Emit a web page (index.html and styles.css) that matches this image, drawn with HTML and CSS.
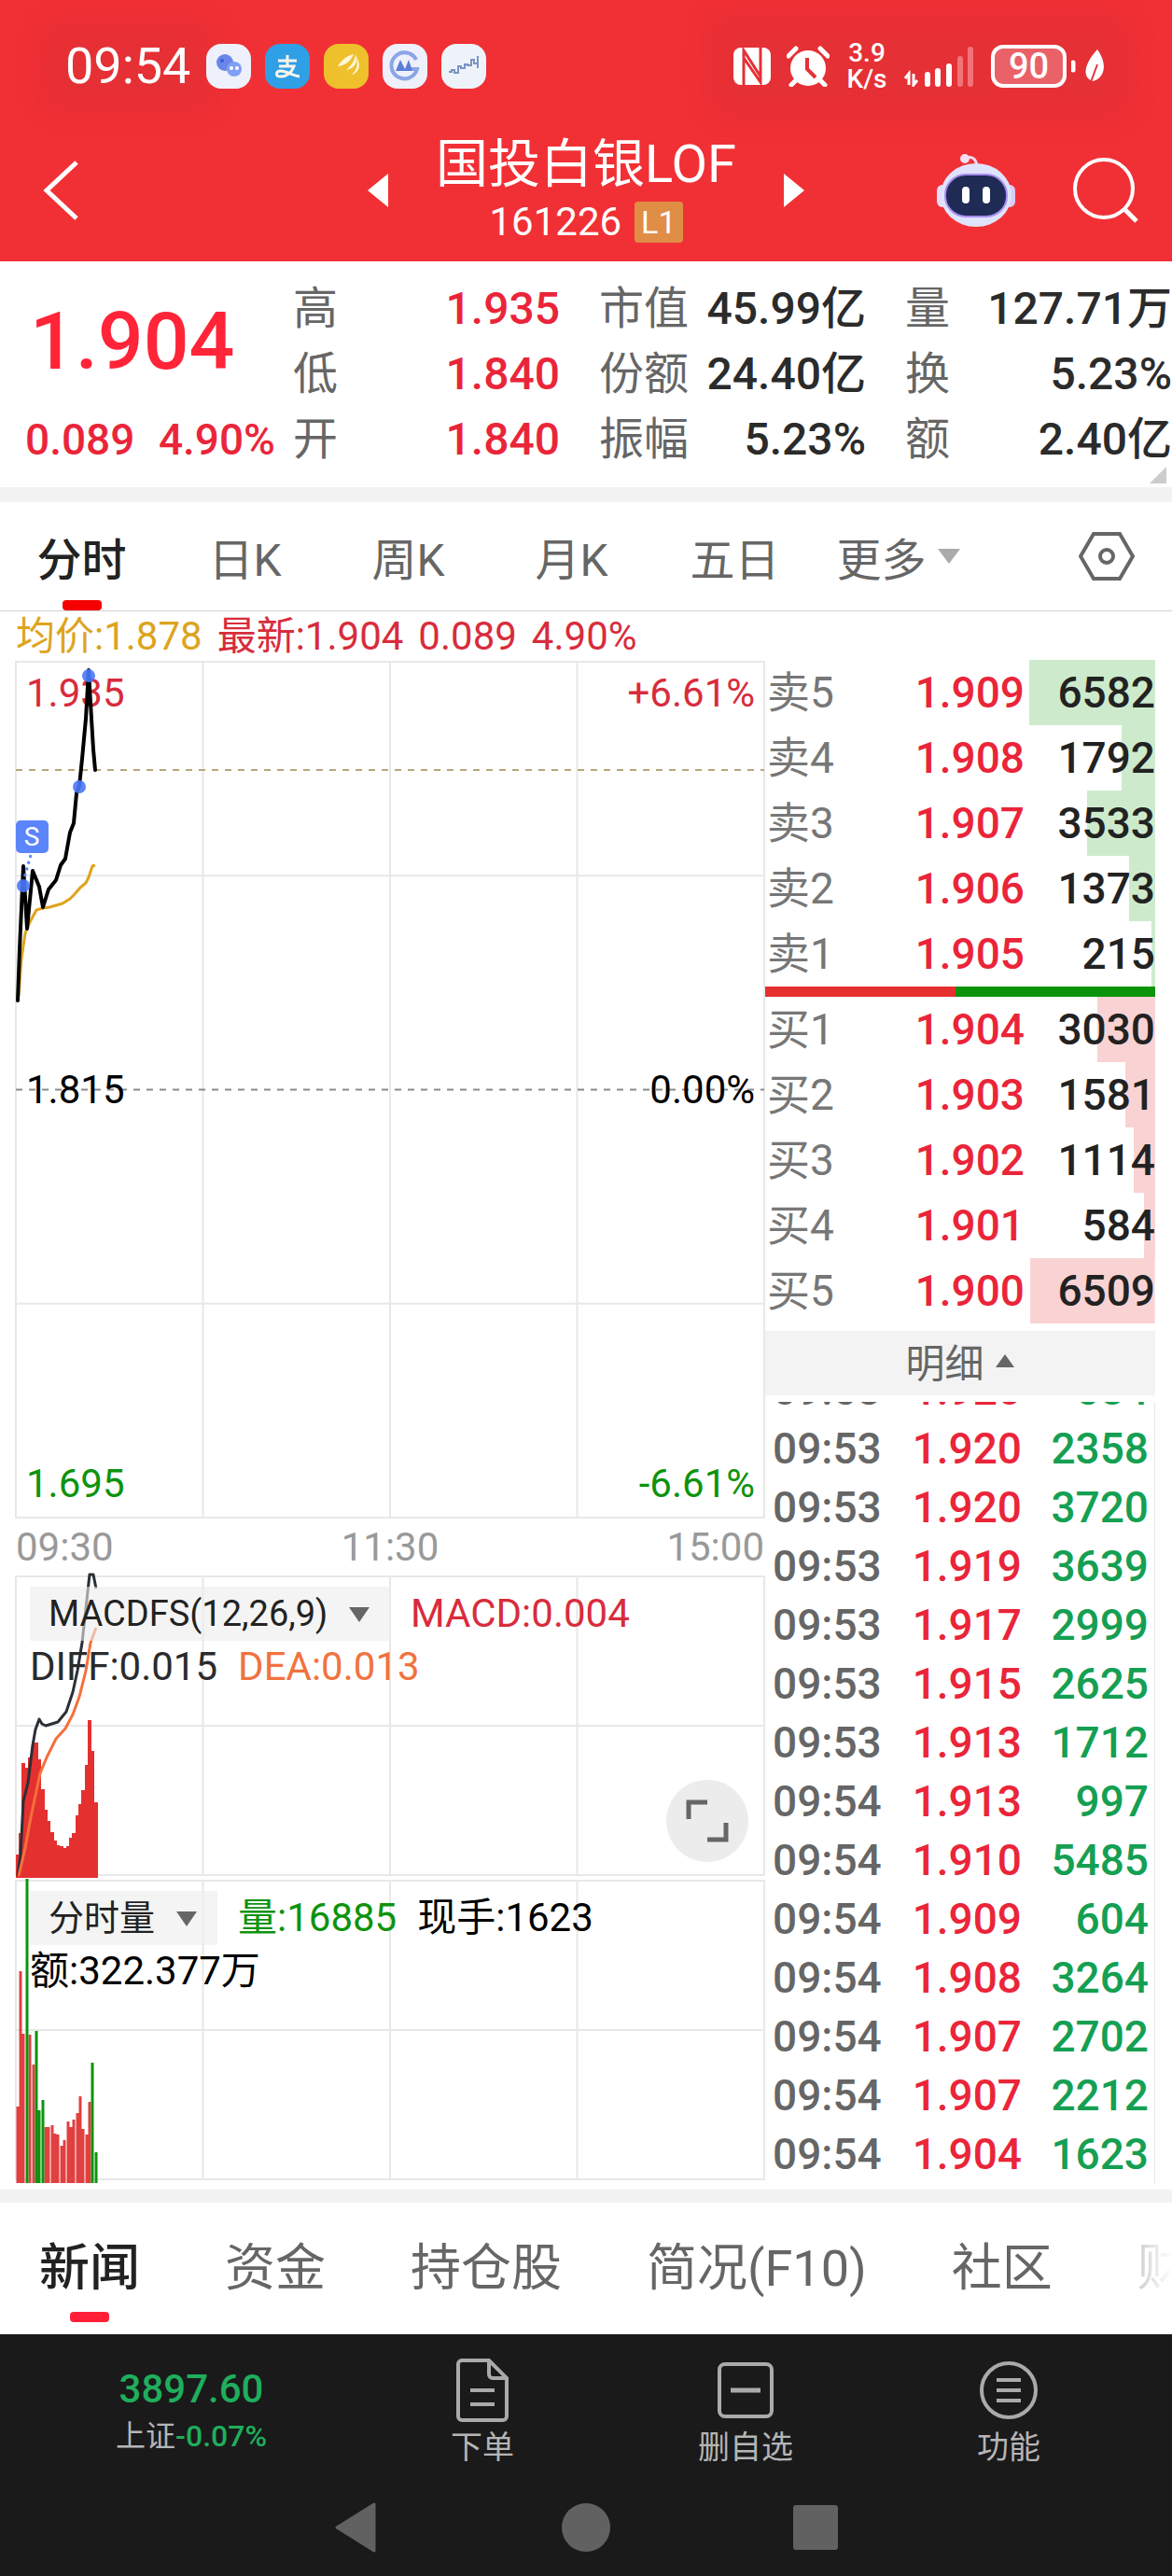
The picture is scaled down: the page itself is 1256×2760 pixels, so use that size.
FILE: index.html
```html
<!DOCTYPE html>
<html lang="zh-CN">
<head>
  <meta charset="UTF-8" />
  <meta name="viewport" content="width=device-width, initial-scale=1.0"/>
  <title>国投白银LOF 161226</title>
  <link rel="stylesheet" href="styles.css">
</head>
<body>
  <header class="top">
    <div class="status">
      <span class="clock">09:54</span>
      <div class="apps">
        <svg width="48" height="48" viewBox="0 0 48 48">
          <rect width="48" height="48" rx="16" fill="#eef1fb"/>
          <circle cx="20" cy="20" r="9" fill="#6a86ea"/>
          <circle cx="30" cy="27" r="8" fill="#7fa0f4"/>
          <circle cx="17" cy="18" r="2" fill="#3f5fd0"/>
          <circle cx="27" cy="26" r="2" fill="#fff"/>
          <circle cx="33" cy="26" r="2" fill="#fff"/>
        </svg>
        <svg width="48" height="48" viewBox="0 0 48 48">
          <rect width="48" height="48" rx="16" fill="#2f9fe6"/>
          <path d="M14 18h20M24 12v11M15 24h16c-3 8-9 11-14 11-6 0-6-6 0-6 6 0 12 5 20 6" fill="none" stroke="#fdf6ea" stroke-width="3"/>
        </svg>
        <svg width="48" height="48" viewBox="0 0 48 48">
          <rect width="48" height="48" rx="16" fill="#eec02c"/>
          <path d="M15 24c5-8 10-11 17-13-3 7-8 12-17 13zM24 28c6-5 9-10 10-17 3 8 0 15-10 17zM29 34c6-5 8-11 6-20 5 8 4 16-6 20z" fill="#fff6dc"/>
        </svg>
        <svg width="48" height="48" viewBox="0 0 48 48">
          <rect width="48" height="48" rx="16" fill="#eef1fb"/>
          <path d="M36 17a14 14 0 1 0 1 10H28" fill="none" stroke="#8aa6e6" stroke-width="4"/>
          <path d="M14 29l5-12 5 10 4-10 4 12z" fill="#5b7fd8"/>
        </svg>
        <svg width="48" height="48" viewBox="0 0 48 48">
          <rect width="48" height="48" rx="16" fill="#eef3fa"/>
          <path d="M8 30h3v-2h3v3h4v-7h3v2h4v-4h3v1h4v-6h3v4h4v-8v13" fill="none" stroke="#7b93c4" stroke-width="2"/>
        </svg>
      </div>
      <div class="status-right">
        <svg width="40" height="42" viewBox="0 0 40 42">
          <rect y="1" width="40" height="40" rx="8" fill="#fff"/>
          <path d="M11 41V4l18 28M29 1v37L11 12" fill="none" stroke="#e53036" stroke-width="3"/>
        </svg>
        <svg width="46" height="44" viewBox="0 0 46 44">
          <circle cx="23" cy="24" r="19" fill="#fff"/>
          <path d="M2 11l8-8M44 11l-8-8M10 37l-5 5M36 37l5 5" stroke="#fff" stroke-width="5" stroke-linecap="round"/>
          <path d="M22 13v12l9 9" fill="none" stroke="#e53036" stroke-width="4"/>
        </svg>
        <div class="speed"><span>3.9</span><span>K/s</span></div>
        <svg width="76" height="44" viewBox="0 0 76 44">
          <path d="M5 42V30l-4 5M10 30v12l4-5" fill="none" stroke="#fff" stroke-width="3"/>
          <path d="M25 31v10M36 27v14M48 22v19" stroke="#fff" stroke-width="6" stroke-linecap="round"/>
          <path d="M60 14v27M71 4v37" stroke="#f17478" stroke-width="6" stroke-linecap="round"/>
        </svg>
        <div class="battery">90</div>
        <svg class="leaf" width="36" height="36" viewBox="0 0 36 36">
          <path d="M2 14v8" stroke="#fff" stroke-width="5" stroke-linecap="round"/>
          <path d="M28 0c12 17 7 31-5 34-12-4-9-19 5-34z" fill="#fff"/>
          <path d="M21 35l7-19" stroke="#e53036" stroke-width="2"/>
        </svg>
      </div>
    </div>

    <div class="titlebar">
      <button class="back" aria-label="返回">
        <svg width="40" height="66" viewBox="0 0 40 66"><path d="M36 3L4 33l32 30" fill="none" stroke="#fff" stroke-width="5"/></svg>
      </button>
      <div class="stock">
        <button aria-label="上一只"><svg width="22" height="36" viewBox="0 0 22 36"><path d="M22 0v36L0 18z" fill="#fff"/></svg></button>
        <div class="stock-name">
          <h1>国投白银LOF</h1>
          <p>161226 <span class="level">L1</span></p>
        </div>
        <button aria-label="下一只"><svg width="22" height="36" viewBox="0 0 22 36"><path d="M0 0v36l22-18z" fill="#fff"/></svg></button>
      </div>
      <div class="actions">
        <button aria-label="助手">
          <svg width="84" height="80" viewBox="0 0 84 80">
            <path d="M31 5c8-2 11 2 12 9" fill="none" stroke="#f1dcf2" stroke-width="3"/>
            <circle cx="30" cy="6" r="5" fill="#f6dff0"/>
            <rect x="0" y="34" width="14" height="24" rx="6" fill="#e6dcfa"/>
            <rect x="70" y="34" width="14" height="24" rx="6" fill="#d9ccf8"/>
            <ellipse cx="42" cy="45" rx="38" ry="34" fill="#dfe3fb"/>
            <rect x="9" y="23" width="66" height="45" rx="22" fill="#1f2b55" stroke="#a78cf0" stroke-width="2"/>
            <path d="M31 40v10M53 40v10" stroke="#fff" stroke-width="8" stroke-linecap="round"/>
          </svg>
        </button>
        <button aria-label="搜索">
          <svg width="70" height="70" viewBox="0 0 70 70"><circle cx="33" cy="33" r="31" fill="none" stroke="#fff" stroke-width="4"/><path d="M55 55l13 13" stroke="#fff" stroke-width="5"/></svg>
        </button>
      </div>
    </div>
  </header>

  <section class="quote">
    <div class="price">
      <strong>1.904</strong>
      <div class="change"><span>0.089</span><span>4.90%</span></div>
    </div>
    <dl class="stats up">
      <div><dt>高</dt><dd>1.935</dd></div>
      <div><dt>低</dt><dd>1.840</dd></div>
      <div><dt>开</dt><dd>1.840</dd></div>
    </dl>
    <dl class="stats">
      <div><dt>市值</dt><dd>45.99亿</dd></div>
      <div><dt>份额</dt><dd>24.40亿</dd></div>
      <div><dt>振幅</dt><dd>5.23%</dd></div>
    </dl>
    <dl class="stats">
      <div><dt>量</dt><dd>127.71万</dd></div>
      <div><dt>换</dt><dd>5.23%</dd></div>
      <div><dt>额</dt><dd>2.40亿</dd></div>
    </dl>
    <svg class="corner" width="18" height="18" viewBox="0 0 18 18"><path d="M18 0v18H0z" fill="#ccc"/></svg>
  </section>

  <nav class="periods">
    <button class="active">分时</button>
    <button>日K</button>
    <button>周K</button>
    <button>月K</button>
    <button>五日</button>
    <button>更多<svg width="24" height="16" viewBox="0 0 24 16"><path d="M0 0h24L12 16z" fill="#aaa"/></svg></button>
    <button class="settings" aria-label="设置">
      <svg width="60" height="52" viewBox="0 0 60 52"><path d="M16 2h28l14 24-14 24H16L2 26z" fill="none" stroke="#666" stroke-width="4"/><circle cx="30" cy="26" r="7" fill="none" stroke="#666" stroke-width="4"/></svg>
    </button>
  </nav>

  <main class="trade">
    <div class="charts">
      <p class="summary"><span class="avg">均价:1.878</span><span class="last">最新:1.904</span><span class="last">0.089</span><span class="last">4.90%</span></p>

      <div class="panel main-panel">
        <svg class="plot" width="100%" height="100%">
          <g class="grid">
            <rect width="100%" height="100%"/>
            <line x1="25%" x2="25%" y2="100%"/>
            <line x1="50%" x2="50%" y2="100%"/>
            <line x1="75%" x2="75%" y2="100%"/>
            <line y1="25%" x2="100%" y2="25%"/>
            <line y1="75%" x2="100%" y2="75%"/>
          </g>
          <line class="dash gold" y1="116" x2="100%" y2="116"/>
          <line class="dash" y1="50%" x2="100%" y2="50%"/>
        </svg>
        <span class="tag left high">1.935</span>
        <span class="tag right high">+6.61%</span>
        <span class="tag left mid">1.815</span>
        <span class="tag right mid">0.00%</span>
        <span class="tag left low">1.695</span>
        <span class="tag right low">-6.61%</span>
        <svg class="plot" width="100%" height="100%">
          <polyline class="line-avg" points="3,358 6,318 10,291 15,279 22,266 29,264 36,263 50,259 58,254 63,249 69,242 75,237 78,231 82,219 85,218"/>
          <polyline class="line-price" points="2,363 4,308 8,219 12,286 18,224 25,241 29,263 35,244 43,234 48,218 53,211 58,183 62,173 65,141 68,133 71,104 75,61 78,9 81,61 83,94 85,116"/>
          <line class="lead" x1="16" y1="207" x2="9" y2="232"/>
          <g fill="#4a78fa" fill-opacity=".9">
            <circle cx="78" cy="15" r="7"/>
            <circle cx="68" cy="134" r="7"/>
            <circle cx="8" cy="240" r="7"/>
          </g>
          <rect y="170" width="35" height="35" rx="5" fill="#5b85fb"/>
          <text class="mark" x="17" y="197">S</text>
        </svg>
      </div>

      <div class="axis"><span>09:30</span><span>11:30</span><span>15:00</span></div>

      <div class="panel sub-panel">
        <svg class="plot" width="100%" height="100%">
          <g class="grid">
            <rect width="100%" height="100%"/>
            <line x1="25%" x2="25%" y2="100%"/>
            <line x1="50%" x2="50%" y2="100%"/>
            <line x1="75%" x2="75%" y2="100%"/>
            <line y1="50%" x2="100%" y2="50%"/>
          </g>
          <path class="bars-solid" d="M2 323v-25M5 323v-48M8 323v-123M12 323v-118M15 323v-129M19 323v-145M22 323v-145M25 323v-127M29 323v-95M32 323v-73M35 323v-61M39 323v-49M42 323v-40M45 323v-35M49 323v-34M52 323v-32M56 323v-34M59 323v-43M62 323v-48M66 323v-67M69 323v-79M72 323v-94M76 323v-121M79 323v-169M82 323v-136M86 323v-81"/>
          <polyline class="line-diff" points="2,321 5,298 8,241 13,221 18,181 21,164 25,153 28,158 32,160 45,156 54,145 61,124 66,101 71,71 79,-2 83,-2 86,13"/>
          <polyline class="line-dea" points="3,321 10,291 16,258 26,211 33,194 43,174 53,163 61,148 68,129 75,101 80,71 86,55"/>
        </svg>
        <div class="legend">
          <div class="picker">
            <select aria-label="指标"><option>MACDFS(12,26,9)</option></select>
            <svg width="22" height="16" viewBox="0 0 22 16"><path d="M0 0h22L11 16z" fill="#666"/></svg>
          </div>
          <span class="last">MACD:0.004</span>
        </div>
        <div class="legend"><span class="diff">DIFF:0.015</span><span class="dea">DEA:0.013</span></div>
        <button class="expand" aria-label="全屏">
          <svg width="46" height="46" viewBox="0 0 46 46"><path d="M3 21V3h20M43 25v18H23" fill="none" stroke="#666" stroke-width="5"/></svg>
        </button>
      </div>

      <div class="panel sub-panel">
        <svg class="plot" width="100%" height="100%">
          <g class="grid">
            <rect width="100%" height="100%"/>
            <line x1="25%" x2="25%" y2="100%"/>
            <line x1="50%" x2="50%" y2="100%"/>
            <line x1="75%" x2="75%" y2="100%"/>
            <line y1="50%" x2="100%" y2="50%"/>
          </g>
        </svg>
        <div class="legend">
          <div class="picker">
            <select aria-label="副图"><option>分时量</option></select>
            <svg width="22" height="16" viewBox="0 0 22 16"><path d="M0 0h22L11 16z" fill="#666"/></svg>
          </div>
          <span class="vol">量:16885</span><span class="black">现手:1623</span>
        </div>
        <div class="legend"><span class="black">额:322.377万</span></div>
        <svg class="plot" width="100%" height="100%">
          <path class="bars-up" d="M2 324v-82M5 324v-227M8 324v-160M15 324v-159M19 324v-127M32 324v-60M35 324v-60M39 324v-62M42 324v-53M45 324v-52M49 324v-40M52 324v-46M56 324v-66M59 324v-60M62 324v-68M66 324v-75M69 324v-93M72 324v-58M76 324v-52M79 324v-87"/>
          <path class="bars-down" d="M12 324v-326M22 324v-163M25 324v-78M29 324v-89M82 324v-129M86 324v-33"/>
        </svg>
      </div>
    </div>

    <aside class="book">
      <table class="depth sell">
        <tr><th>卖5</th><td>1.909</td><td style="--size:100%">6582</td></tr>
        <tr><th>卖4</th><td>1.908</td><td style="--size:27%">1792</td></tr>
        <tr><th>卖3</th><td>1.907</td><td style="--size:54%">3533</td></tr>
        <tr><th>卖2</th><td>1.906</td><td style="--size:21%">1373</td></tr>
        <tr><th>卖1</th><td>1.905</td><td style="--size:3%">215</td></tr>
      </table>
      <div class="ratio"><i style="width:49%"></i></div>
      <table class="depth buy">
        <tr><th>买1</th><td>1.904</td><td style="--size:46%">3030</td></tr>
        <tr><th>买2</th><td>1.903</td><td style="--size:24%">1581</td></tr>
        <tr><th>买3</th><td>1.902</td><td style="--size:17%">1114</td></tr>
        <tr><th>买4</th><td>1.901</td><td style="--size:9%">584</td></tr>
        <tr><th>买5</th><td>1.900</td><td style="--size:99%">6509</td></tr>
      </table>
      <button class="detail">明细<svg width="20" height="14" viewBox="0 0 20 14"><path d="M10 0l10 14H0z" fill="#666"/></svg></button>
      <div class="ticks">
        <table>
          <tr><td>09:53</td><td>1.920</td><td>584</td></tr>
          <tr><td>09:53</td><td>1.920</td><td>2358</td></tr>
          <tr><td>09:53</td><td>1.920</td><td>3720</td></tr>
          <tr><td>09:53</td><td>1.919</td><td>3639</td></tr>
          <tr><td>09:53</td><td>1.917</td><td>2999</td></tr>
          <tr><td>09:53</td><td>1.915</td><td>2625</td></tr>
          <tr><td>09:53</td><td>1.913</td><td>1712</td></tr>
          <tr><td>09:54</td><td>1.913</td><td>997</td></tr>
          <tr><td>09:54</td><td>1.910</td><td>5485</td></tr>
          <tr><td>09:54</td><td>1.909</td><td>604</td></tr>
          <tr><td>09:54</td><td>1.908</td><td>3264</td></tr>
          <tr><td>09:54</td><td>1.907</td><td>2702</td></tr>
          <tr><td>09:54</td><td>1.907</td><td>2212</td></tr>
          <tr><td>09:54</td><td>1.904</td><td>1623</td></tr>
        </table>
      </div>
    </aside>
  </main>

  <nav class="news">
    <button class="active">新闻</button>
    <button>资金</button>
    <button>持仓股</button>
    <button>简况(F10)</button>
    <button>社区</button>
    <button>财务</button>
  </nav>

  <footer class="bottom">
    <div class="tools">
      <a class="index" href="#"><b>3897.60</b><span>上证<em>-0.07%</em></span></a>
      <button>
        <svg width="64" height="68" viewBox="0 0 64 68"><path d="M39 2H10a4 4 0 0 0-4 4v56a4 4 0 0 0 4 4h44a4 4 0 0 0 4-4V21L39 2v15a4 4 0 0 0 4 4h15M19 34h26M19 49h26" fill="none" stroke="#aaa" stroke-width="4"/></svg>
        下单
      </button>
      <button>
        <svg width="64" height="68" viewBox="0 0 64 68"><rect x="4" y="6" width="56" height="56" rx="6" fill="none" stroke="#aaa" stroke-width="4"/><path d="M16 34h32" stroke="#aaa" stroke-width="5"/></svg>
        删自选
      </button>
      <button>
        <svg width="64" height="68" viewBox="0 0 64 68"><circle cx="32" cy="34" r="29" fill="none" stroke="#aaa" stroke-width="4"/><path d="M19 23h26M19 34h26M19 45h26" stroke="#aaa" stroke-width="4"/></svg>
        功能
      </button>
    </div>
    <div class="system">
      <button aria-label="后退"><svg width="54" height="54" viewBox="0 0 54 54"><path d="M46 2v50L6 27z" fill="#616161" stroke="#616161" stroke-width="3" stroke-linejoin="round"/></svg></button>
      <button aria-label="主页"><svg width="54" height="54" viewBox="0 0 54 54"><circle cx="27" cy="27" r="26" fill="#616161"/></svg></button>
      <button aria-label="最近"><svg width="54" height="54" viewBox="0 0 54 54"><rect x="3" y="3" width="48" height="48" rx="3" fill="#616161"/></svg></button>
    </div>
  </footer>
</body>
</html>
```
FILE: styles.css
```css
:root {
  --red: #f13035;
  --up: #ea2539;
  --down: #159f53;
  --line: #e8e8e8;
  --band: #f2f2f2;
}

* {
  box-sizing: border-box;
}

body {
  margin: 0;
  background: #fff;
  color: #2b2b2b;
  font-family: Roboto, "Noto Sans CJK SC", sans-serif;
  font-size: 42px;
}

h1, p, dl, dd {
  margin: 0;
}

button, select {
  border: none;
  background: none;
  padding: 0;
  margin: 0;
  color: inherit;
  font: inherit;
  cursor: pointer;
}

svg {
  display: block;
  flex: none;
}

/* status bar + title */
.top {
  background: var(--red);
  color: #fff;
}

.status {
  display: flex;
  align-items: center;
  height: 142px;
  padding: 0 72px 0 70px;
}

.clock {
  font-size: 54px;
  line-height: 40px;
  background: rgba(150, 50, 60, 0.12);
  box-shadow: 0 0 36px 24px rgba(150, 50, 60, 0.12);
}

.apps {
  display: flex;
  gap: 15px;
  margin-left: 17px;
}

.status-right {
  display: flex;
  align-items: center;
  margin-left: auto;
  gap: 17px;
  background: rgba(150, 50, 60, 0.12);
  box-shadow: 0 0 36px 24px rgba(150, 50, 60, 0.12);
}

.speed {
  display: flex;
  flex-direction: column;
  align-items: center;
  width: 46px;
  font-size: 28px;
  font-weight: 500;
  line-height: 28px;
}

.battery {
  width: 81px;
  height: 46px;
  border: 4px solid #fff;
  border-radius: 13px;
  background: #ea6268;
  font-size: 38px;
  font-weight: 500;
  line-height: 38px;
  text-align: center;
}

.leaf {
  margin-left: -12px;
}

.titlebar {
  display: grid;
  grid-template-columns: 1fr 468px 1fr;
  align-items: center;
  padding: 0 36px 14px;
}

.back {
  justify-self: start;
  padding-left: 10px;
}

.stock {
  display: flex;
  align-items: center;
  justify-content: space-between;
}

.stock-name {
  text-align: center;
}

.stock h1 {
  font-size: 56px;
  font-weight: 400;
  line-height: 68px;
}

.stock p {
  display: flex;
  align-items: center;
  justify-content: center;
  gap: 14px;
  line-height: 56px;
}

.level {
  padding: 0 7px;
  border-radius: 4px;
  background: #e08e46;
  font-size: 34px;
  line-height: 44px;
}

.actions {
  display: flex;
  align-items: center;
  justify-content: flex-end;
  gap: 62px;
}

/* quote */
.quote {
  position: relative;
  display: grid;
  grid-template-columns: 272px 1fr 1fr 1fr;
  gap: 42px;
  padding-top: 16px;
  height: 258px;
  border-bottom: 16px solid var(--band);
}

.price {
  color: #ff2438;
  font-weight: 500;
}

.price strong {
  display: block;
  padding-left: 32px;
  font-size: 86px;
  font-weight: 500;
  line-height: 140px;
}

.change {
  display: flex;
  justify-content: space-between;
  width: 268px;
  margin-left: 27px;
  color: var(--up);
  font-size: 46px;
  line-height: 70px;
}

.stats div {
  display: flex;
  justify-content: space-between;
  font-size: 48px;
  line-height: 70px;
}

.stats dt {
  color: #666;
}

.stats dd {
  font-weight: 500;
}

.stats.up dd {
  color: var(--up);
}

.corner {
  position: absolute;
  right: 6px;
  bottom: 4px;
}

/* chart period tabs */
.periods {
  display: grid;
  grid-template-columns: repeat(6, 175px) 1fr;
  height: 117px;
  border-bottom: 1px solid #d4d4d4;
  color: #666;
  font-size: 48px;
}

.periods button {
  position: relative;
  display: flex;
  align-items: center;
  justify-content: center;
  gap: 12px;
}

.periods .settings {
  justify-content: flex-end;
  padding-right: 40px;
}

.active {
  color: #222;
  font-weight: 500;
}

.periods .active::after,
.news .active::after {
  content: "";
  position: absolute;
  left: calc(50% - 21px);
  bottom: 0;
  width: 42px;
  height: 11px;
  border-radius: 4px;
  background: #f40000;
}

/* charts */
.trade {
  display: grid;
  grid-template-columns: 1fr 419px;
  padding: 0 18px 0 17px;
  border-bottom: 14px solid var(--band);
}

.summary {
  display: flex;
  gap: 16px;
  line-height: 54px;
}

.avg {
  color: #dda41e;
}

.last {
  color: #d82c3c;
}

.panel {
  position: relative;
}

.main-panel {
  height: 917px;
}

.sub-panel {
  height: 320px;
  margin-bottom: 6px;
  padding: 11px 15px;
}

.plot {
  position: absolute;
  left: 0;
  top: 0;
  overflow: visible;
  pointer-events: none;
}

.plot polyline {
  fill: none;
  stroke-linejoin: round;
}

.grid {
  fill: none;
  stroke: var(--line);
  stroke-width: 2;
}

.dash {
  stroke: #8a8a8a;
  stroke-width: 2;
  stroke-dasharray: 7 7;
}

.gold {
  stroke: #b9a679;
}

.line-price {
  stroke: #000;
  stroke-width: 4;
  stroke-linecap: round;
}

.line-avg {
  stroke: #dda41e;
  stroke-width: 3;
}

.line-diff {
  stroke: #2b2f36;
  stroke-width: 3;
}

.line-dea {
  stroke: #f4703c;
  stroke-width: 3;
}

.lead {
  stroke: #5b85fb;
  stroke-width: 3;
  stroke-dasharray: 3 4;
}

.mark {
  fill: #fff;
  font-size: 28px;
  text-anchor: middle;
}

.bars-solid {
  stroke: #e53030;
  stroke-width: 4;
}

.bars-up {
  stroke: #e04040;
  stroke-width: 3;
}

.bars-down {
  stroke: #0e930e;
  stroke-width: 3;
}

.tag {
  position: absolute;
  line-height: 68px;
}

.tag.left {
  left: 11px;
}

.tag.right {
  right: 10px;
}

.tag.high {
  top: 0;
  color: #d82c3c;
}

.tag.mid {
  top: calc(50% - 34px);
  color: #000;
}

.tag.low {
  bottom: 2px;
  color: #0e930e;
}

.axis {
  display: flex;
  justify-content: space-between;
  color: #999;
  line-height: 63px;
}

.legend {
  position: relative;
  display: flex;
  align-items: center;
  gap: 22px;
  line-height: 56px;
}

.picker {
  position: relative;
}

.picker select {
  display: block;
  appearance: none;
  height: 58px;
  padding: 0 66px 0 20px;
  border-radius: 0;
  background: rgba(236, 236, 236, 0.6);
  color: #222;
  font-size: 38px;
}

.picker svg {
  position: absolute;
  right: 22px;
  top: 22px;
  pointer-events: none;
}

.dea {
  color: #f0733f;
}

.vol {
  color: #0e930e;
}

.black {
  color: #000;
}

.expand {
  position: absolute;
  right: 17px;
  bottom: 14px;
  display: flex;
  align-items: center;
  justify-content: center;
  width: 88px;
  height: 88px;
  border-radius: 50%;
  background: #ececec;
}

/* order book */
.book {
  padding-top: 52px;
}

.book table {
  width: 100%;
  border-collapse: collapse;
  table-layout: fixed;
  font-size: 46px;
  font-weight: 500;
}

.book th, .book td {
  padding: 0;
  color: var(--up);
  text-align: right;
}

.depth tr {
  height: 70px;
  line-height: 70px;
}

.depth th {
  width: 100px;
  padding-left: 3px;
  color: #777;
  font-weight: 400;
  text-align: left;
}

.depth td:nth-child(2) {
  padding-right: 5px;
}

.depth td:last-child {
  width: 135px;
  color: #222;
  background: linear-gradient(var(--tone), var(--tone)) right / var(--size) 100% no-repeat;
}

.sell {
  --tone: #cdebcc;
}

.buy {
  --tone: #f9d3d3;
}

.ratio {
  height: 11px;
  background: #0a940a;
}

.ratio i {
  display: block;
  height: 100%;
  background: #e52f30;
}

.detail {
  display: flex;
  align-items: center;
  justify-content: center;
  gap: 12px;
  width: 100%;
  height: 69px;
  margin: 8px 0 7px;
  padding-bottom: 6px;
  background: #f3f3f3;
  color: #666;
}

/* the list sticks to its newest row, older rows run out at the top */
.ticks {
  display: flex;
  align-items: flex-end;
  height: 838px;
  margin-bottom: 6px;
  overflow: hidden;
  border-right: 1px solid var(--line);
}

.ticks tr {
  height: 63px;
  line-height: 63px;
}

.ticks td:first-child {
  width: 125px;
  padding-left: 9px;
  color: #666;
  text-align: left;
}

.ticks td:nth-child(2) {
  padding-right: 4px;
}

.ticks td:last-child {
  width: 138px;
  padding-right: 6px;
  color: var(--down);
}

/* news tabs */
.news {
  position: relative;
  display: flex;
  gap: 91px;
  height: 141px;
  padding-left: 42px;
  overflow: hidden;
  color: #666;
  font-size: 54px;
}

.news button {
  position: relative;
  flex: none;
  padding-bottom: 10px;
}

.news .active::after {
  bottom: 13px;
  background: #ff2038;
}

.news::after {
  content: "";
  position: absolute;
  right: 0;
  top: 0;
  width: 80px;
  height: 100%;
  background: linear-gradient(to right, rgba(255, 255, 255, 0.3), #fff);
}

/* bottom bar */
.bottom {
  background: #1a1a1a;
  color: #b5b5b5;
}

.tools {
  display: grid;
  grid-template-columns: 342px repeat(3, 1fr);
  height: 155px;
  padding: 26px 34px 0;
  font-size: 34px;
  line-height: 54px;
}

.tools button {
  display: flex;
  flex-direction: column;
  align-items: center;
}

.index {
  display: flex;
  flex-direction: column;
  align-items: center;
  padding-top: 8px;
  color: inherit;
  font-size: 32px;
  line-height: 50px;
  text-decoration: none;
}

.index b {
  font-size: 42px;
  font-weight: 500;
}

.index b, .index em {
  color: #1fae5c;
  font-style: normal;
  font-weight: 500;
}

.system {
  display: flex;
  justify-content: center;
  gap: 192px;
  padding: 25px 0;
}
```
